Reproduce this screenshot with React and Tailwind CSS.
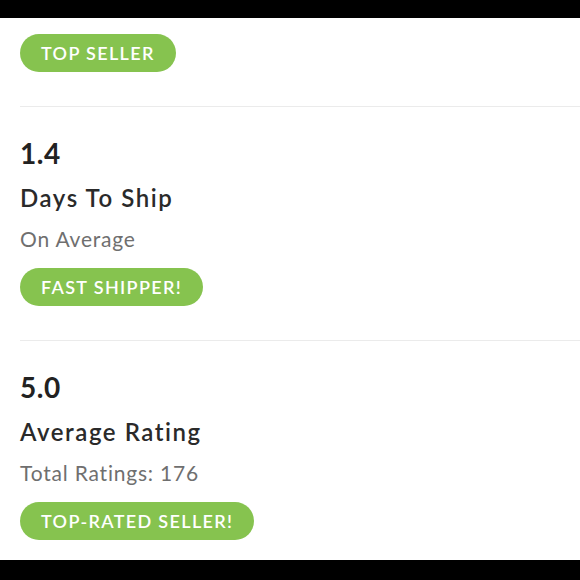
const STATS = [
  { value: "1.4", title: "Days To Ship", sub: "On Average", badge: "FAST SHIPPER!" },
  { value: "5.0", title: "Average Rating", sub: "Total Ratings: 176", badge: "TOP-RATED SELLER!" },
];

function Badge({ children }) {
  return (
    <div className="inline-flex h-[38px] items-center rounded-full bg-[#86c34f] pl-[21px] pr-[21px] text-[18px] font-semibold tracking-[1.35px] text-white">
      {children}
    </div>
  );
}

export default function App() {
  return (
    <div className="flex h-[580px] w-[580px] flex-col bg-black font-['Lato',sans-serif]">
      <div className="h-[18px] shrink-0" />
      <div className="flex-1 bg-white">
        <div className="ml-5 border-b border-[#ebebeb] pt-4 pb-[34px]">
          <Badge>TOP SELLER</Badge>
        </div>
        {STATS.map((s, i) => (
          <div
            key={s.value}
            className={"ml-5 pt-[30px] " + (i === 0 ? "border-b border-[#ebebeb] pb-[34px]" : "")}
          >
            <div className="text-[28px] font-bold leading-[32px] tracking-[0.5px] text-[#222]">
              {s.value}
            </div>
            <div className="mt-[15px] text-[24px] font-semibold leading-[28px] tracking-[1.55px] text-[#2a2a2a]">
              {s.title}
            </div>
            <div className="mt-[15px] text-[21px] leading-[24px] tracking-[0.8px] text-[#6f6f6f]">
              {s.sub}
            </div>
            <div className="mt-[17px]">
              <Badge>{s.badge}</Badge>
            </div>
          </div>
        ))}
      </div>
      <div className="h-[20px] shrink-0" />
    </div>
  );
}
